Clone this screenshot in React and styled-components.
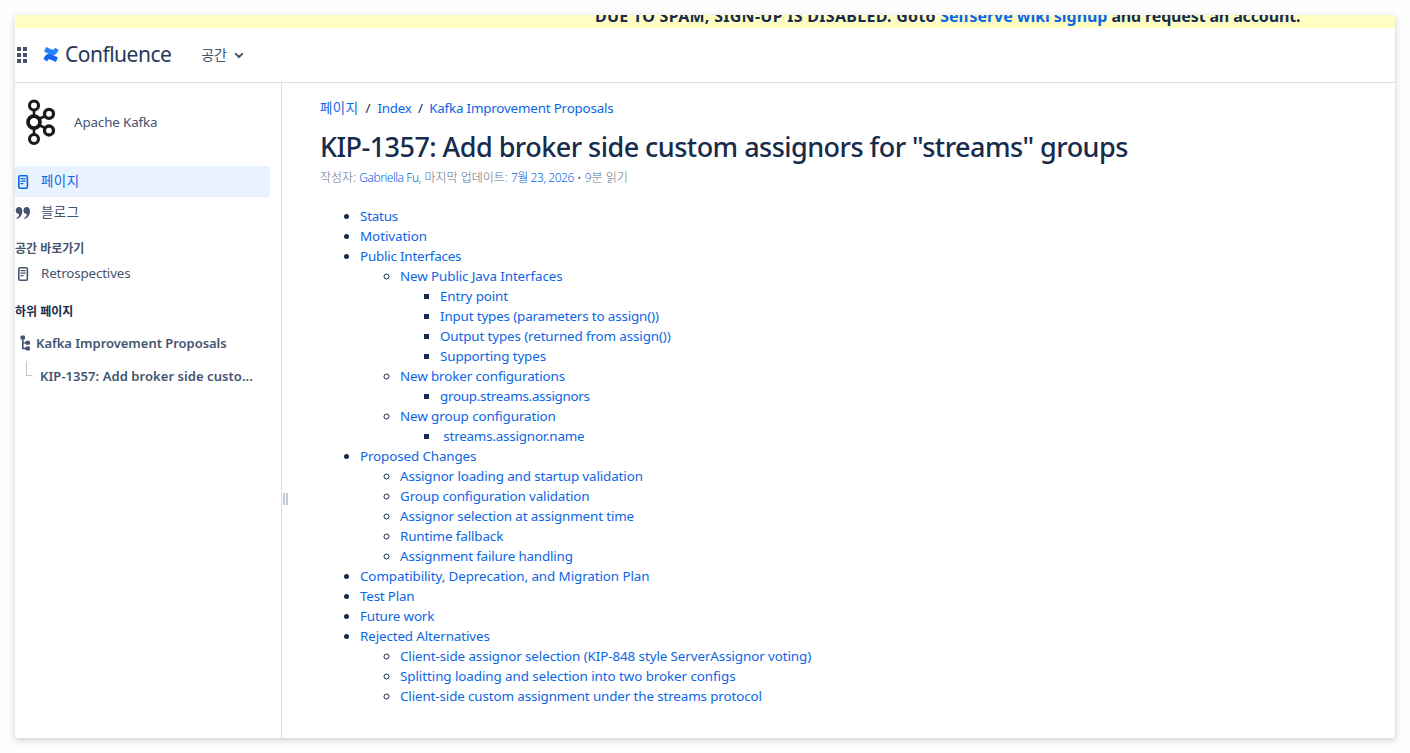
import React from 'react';
import styled, { createGlobalStyle } from 'styled-components';

const GlobalStyle = createGlobalStyle`
  body {
    margin: 0;
    background: #fefefe;
    color: #172b4d;
    font-family: 'Noto Sans', 'Noto Sans CJK KR', sans-serif;
    font-size: 13.4px;
    line-height: 20px;
  }
  * {
    box-sizing: border-box;
  }
`;
const Screen = styled.div`
  width: 1410px;
  height: 753px;
  padding: 15px;
  overflow: hidden;
`;
const Window = styled.div`
  display: flex;
  flex-direction: column;
  height: 723px;
  border-radius: 2px;
  background: #fff;
  box-shadow: 0 2px 7px rgba(0, 0, 0, 0.2);
  overflow: hidden;
`;
const Banner = styled.div`
  display: flex;
  align-items: flex-end;
  flex: none;
  height: 13px;
  padding-left: 580px;
  background: #ffffc4;
  overflow: hidden;
`;
const BannerText = styled.b`
  font-size: 16px;
  line-height: 24px;
  letter-spacing: ${p => p.$ls || 0}px;
  white-space: pre;
`;
const Link = styled.a`
  color: #0c66e4;
  text-decoration: none;
  letter-spacing: ${p => p.$ls || 0}px;
`;
const Header = styled.header`
  display: flex;
  align-items: center;
  flex: none;
  height: 55px;
  padding-left: 2px;
  border-bottom: 1px solid #dcdde6;
  color: #44546f;
`;
const Logo = styled.div`
  display: flex;
  align-items: center;
  gap: 6px;
  height: 30px;
  margin: 0 30px 2px 15px;
  color: #253858;
  font-size: 21px;
  letter-spacing: -0.5px;
  line-height: 28px;
`;
const SpaceMenu = styled.div`
  display: flex;
  align-items: center;
  gap: 7px;
  font-size: 14px;
  letter-spacing: -0.3px;
`;
const Body = styled.div`
  display: flex;
  flex: 1;
  min-height: 0;
`;
const Sidebar = styled.aside`
  width: 267px;
  padding-top: 12px;
  border-right: 1px solid #d5d8de;
  color: #44546f;
`;
const Space = styled.div`
  display: flex;
  align-items: center;
  gap: 17px;
  height: 53px;
  padding-left: 10px;
  letter-spacing: -0.15px;
`;
const NavItem = styled.div`
  display: flex;
  align-items: center;
  gap: 10px;
  width: 255px;
  height: ${p => p.$height || 31}px;
  margin-top: ${p => p.$top || 0}px;
  padding-bottom: ${p => p.$lift || 0}px;
  border-radius: 0 3px 3px 0;
  background: ${p => (p.$active ? '#e9f2ff' : 'none')};
  color: ${p => (p.$active ? '#0c66e4' : '#44546f')};
  letter-spacing: ${p => p.$ls || 0}px;

  svg {
    flex: none;
    margin-top: ${p => 1 + (p.$lift || 0)}px;
  }
`;
const NavTitle = styled.div`
  margin-top: ${p => p.$top}px;
  color: ${p => p.$color};
  font-size: 12px;
  font-weight: 700;
`;
const TreeItem = styled.div`
  display: flex;
  align-items: center;
  gap: ${p => p.$gap}px;
  height: 20px;
  margin-top: ${p => p.$top}px;
  padding-left: ${p => p.$left}px;
  font-weight: 600;
  font-size: 13px;
  letter-spacing: ${p => p.$ls}px;
  white-space: nowrap;
`;
const Branch = styled.i`
  width: 6px;
  height: 15px;
  margin-top: -16px;
  border-left: 1px solid #c1c7d0;
  border-bottom: 1px solid #c1c7d0;
`;
const Splitter = styled.div`
  display: flex;
  align-self: center;
  gap: 1px;
  width: 6px;
  margin-left: 1px;
  padding-top: 176px;
`;
const Grip = styled.i`
  width: 2px;
  height: 12px;
  background: #c1c9d4;
`;
const Content = styled.main`
  flex: 1;
  padding: 15px 0 0 31px;
`;
const Breadcrumbs = styled.nav`
  display: flex;
  white-space: pre;
`;
const Slash = styled.span`
  width: ${p => p.$width}px;
  text-align: center;
`;
const PageTitle = styled.h1`
  margin: 13px 0 0;
  font-size: 27px;
  font-weight: 500;
  line-height: 32px;
  letter-spacing: -0.53px;
  white-space: nowrap;
`;
const Meta = styled.div`
  margin-top: 5px;
  color: #626f86;
  font-size: 12px;
  font-weight: 300;
  white-space: nowrap;
`;
const List = styled.ul`
  margin: ${p => (p.$root ? '18px 0 0' : 0)};
  padding-left: 40px;
  white-space: pre;
`;

const PageIcon = () => (
  <svg width="16" height="16" viewBox="0 0 16 16" fill="none" stroke="currentColor">
    <rect x="3.8" y="1.8" width="8.6" height="12.4" rx="1.4" strokeWidth="1.6" />
    <path d="M5.5 4.6h5.2M5.5 7.1h5.2M5.5 9.6h3" strokeWidth="1.2" />
  </svg>
);

const QuoteIcon = () => (
  <svg width="16" height="16" viewBox="0 0 16 16" fill="currentColor">
    <path d="M3.9 2c2.1 0 3.4 1.6 3.4 4.1 0 3.8-2 6.900-5.400 8l-.6-.8c1.700-1 2.700-2.500 2.900-4.300C2.200 9.100.7 7.600.7 5.600.7 3.500 2.100 2 3.900 2z" />
    <path d="M11.600 2c2.100 0 3.400 1.600 3.400 4.100 0 3.800-2 6.900-5.400 8l-.6-.8c1.700-1 2.700-2.500 2.900-4.300-2 .1-3.500-1.400-3.500-3.400C8.400 3.500 9.800 2 11.600 2z" />
  </svg>
);

const TreeIcon = () => (
  <svg width="11" height="16" viewBox="0 0 11 16" fill="currentColor">
    <rect x="0.5" y="0.5" width="4.5" height="4" rx="1" />
    <rect x="5.5" y="5.8" width="4.5" height="4" rx="1" />
    <rect x="5.5" y="11.5" width="4.5" height="4" rx="1" />
    <path d="M2 4h1.6v3.2H6v1.4H3.6v4.2H6v1.4H2z" />
  </svg>
);

const KafkaLogo = () => (
  <svg width="32" height="48" viewBox="0 0 32 48" fill="none" stroke="#1a1a1a">
    <path d="M9 12v6M9 29v7M14 21l6-3M14 27l6 3" strokeWidth="2.6" />
    <circle cx="9" cy="7.5" r="4.5" strokeWidth="3.1" />
    <circle cx="9" cy="24.1" r="6" strokeWidth="3.7" />
    <circle cx="9" cy="41" r="4.5" strokeWidth="3.1" />
    <circle cx="24" cy="15.8" r="4.5" strokeWidth="3.3" />
    <circle cx="24" cy="32.5" r="4.5" strokeWidth="3.3" />
  </svg>
);

const toc = [
  { text: 'Status', ls: -0.2 },
  { text: 'Motivation', ls: -0.05 },
  {
    text: 'Public Interfaces',
    ls: -0.2,
    items: [
      {
        text: 'New Public Java Interfaces',
        ls: -0.1,
        items: [
          { text: 'Entry point' },
          { text: 'Input types (parameters to assign())', ls: -0.15 },
          { text: 'Output types (returned from assign())' },
          { text: 'Supporting types' }
        ]
      },
      { text: 'New broker configurations', items: [{ text: 'group.streams.assignors', ls: -0.28 }] },
      { text: 'New group configuration', ls: -0.09, items: [{ text: ' streams.assignor.name', ls: -0.2 }] }
    ]
  },
  {
    text: 'Proposed Changes',
    items: [
      { text: 'Assignor loading and startup validation' },
      { text: 'Group configuration validation' },
      { text: 'Assignor selection at assignment time', ls: -0.14 },
      { text: 'Runtime fallback' },
      { text: 'Assignment failure handling', ls: -0.17 }
    ]
  },
  { text: 'Compatibility, Deprecation, and Migration Plan', ls: -0.09 },
  { text: 'Test Plan', ls: -0.2 },
  { text: 'Future work', ls: -0.16 },
  {
    text: 'Rejected Alternatives',
    items: [
      { text: 'Client-side assignor selection (KIP-848 style ServerAssignor voting)', ls: -0.09 },
      { text: 'Splitting loading and selection into two broker configs', ls: -0.07 },
      { text: 'Client-side custom assignment under the streams protocol' }
    ]
  }
];

const Toc = ({ items, root }) => (
  <List $root={root}>
    {items.map(item => (
      <li key={item.text}>
        <Link $ls={item.ls || -0.12}>{item.text}</Link>
        {item.items && <Toc items={item.items} />}
      </li>
    ))}
  </List>
);

export default function App() {
  return (
    <Screen>
      <GlobalStyle />
      <Window>
        <Banner>
          <BannerText $ls={0.28}>DUE TO SPAM, SIGN-UP IS DISABLED. Goto </BannerText>
          <BannerText>
            <Link $ls={-0.05}>Selfserve wiki signup</Link>
          </BannerText>
          <BannerText $ls={-0.15}> and request an account.</BannerText>
        </Banner>
        <Header>
          <svg width="11" height="16" viewBox="0 0 11 16" fill="#44546f">
            {[0, 6, 12].map(y => (
              <React.Fragment key={y}>
                <rect x="0" y={y} width="4" height="4" />
                <rect x="6" y={y} width="4" height="4" />
              </React.Fragment>
            ))}
          </svg>
          <Logo>
            <svg width="16" height="15" viewBox="0 0 16 15">
              <path d="M.4 12.1 1.8 9.6C3.6 6.5 6 6.4 8.4 7.5l6.5 2.8-1.9 4.6-5-2.2c-1.8-.8-2.6-.7-3.5.9l-.4.8z" fill="#1565f0" />
              <path d="M15.6 2.9 14.2 5.4C12.4 8.5 10 8.6 7.6 7.5L1.1 4.700 3 .1l5 2.200c1.800.8 2.600.7 3.500-.9l.4-.8z" fill="#2680ff" />
            </svg>
            <span>Confluence</span>
          </Logo>
          <SpaceMenu>
            <span>공간</span>
            <svg width="10" height="7" viewBox="0 0 10 7" fill="none" stroke="#44546f" strokeWidth="2" strokeLinecap="round">
              <path d="M1.8 1.9 5 5l3.2-3.1" />
            </svg>
          </SpaceMenu>
        </Header>
        <Body>
          <Sidebar>
            <Space>
              <KafkaLogo />
              <span>Apache Kafka</span>
            </Space>
            <NavItem $active $top={18} $lift={2} $ls={0.5}>
              <PageIcon />
              <span>페이지</span>
            </NavItem>
            <NavItem $lift={2} $ls={0.5}>
              <QuoteIcon />
              <span>블로그</span>
            </NavItem>
            <NavTitle $top={11} $color="#44546f">
              공간 바로가기
            </NavTitle>
            <NavItem $height={30} $top={-1} $ls={-0.17}>
              <PageIcon />
              <span>Retrospectives</span>
            </NavItem>
            <NavTitle $top={14} $color="#172b4d">
              하위 페이지
            </NavTitle>
            <TreeItem $top={11} $left={5} $gap={5} $ls={-0.03}>
              <TreeIcon />
              <span>Kafka Improvement Proposals</span>
            </TreeItem>
            <TreeItem $top={13} $left={11} $gap={8} $ls={0.06}>
              <Branch />
              <span>KIP-1357: Add broker side custo...</span>
            </TreeItem>
          </Sidebar>
          <Splitter>
            <Grip />
            <Grip />
          </Splitter>
          <Content>
            <Breadcrumbs>
              <Link $ls={0.5}>페이지</Link>
              <Slash $width={19}>/</Slash>
              <Link $ls={-0.25}>Index</Link>
              <Slash $width={17.5}>/</Slash>
              <Link $ls={-0.19}>Kafka Improvement Proposals</Link>
            </Breadcrumbs>
            <PageTitle>KIP-1357: Add broker side custom assignors for "streams" groups</PageTitle>
            <Meta>
              작성자: <Link $ls={-0.45}>Gabriella Fu</Link>, 마지막 업데이트: <Link $ls={-0.45}>7월 23, 2026</Link> • 9분 읽기
            </Meta>
            <Toc items={toc} root />
          </Content>
        </Body>
      </Window>
    </Screen>
  );
}
